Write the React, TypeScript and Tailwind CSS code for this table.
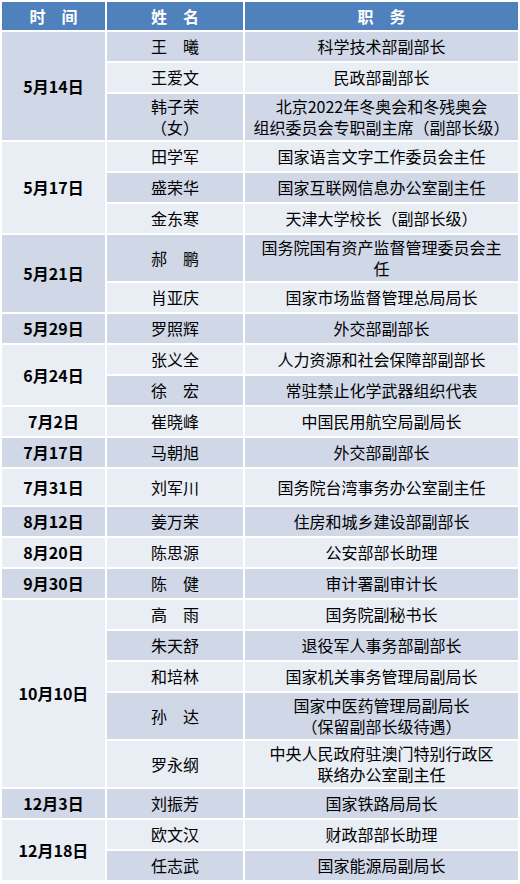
import React from "react";

type Row = { name: string[]; pos: string[]; tall?: boolean };
type Group = { date: string; rows: Row[] };

const groups: Group[] = [
    {
        date: "5月14日",
        rows: [
            { name: ["王　曦"], pos: ["科学技术部副部长"] },
            { name: ["王爱文"], pos: ["民政部副部长"] },
            { name: ["韩子荣", "（女）"], pos: ["北京2022年冬奥会和冬残奥会", "组织委员会专职副主席（副部长级）"] },
        ],
    },
    {
        date: "5月17日",
        rows: [
            { name: ["田学军"], pos: ["国家语言文字工作委员会主任"] },
            { name: ["盛荣华"], pos: ["国家互联网信息办公室副主任"] },
            { name: ["金东寒"], pos: ["天津大学校长（副部长级）"] },
        ],
    },
    {
        date: "5月21日",
        rows: [
            { name: ["郝　鹏"], pos: ["国务院国有资产监督管理委员会主", "任"] },
            { name: ["肖亚庆"], pos: ["国家市场监督管理总局局长"] },
        ],
    },
    { date: "5月29日", rows: [{ name: ["罗照辉"], pos: ["外交部副部长"] }] },
    {
        date: "6月24日",
        rows: [
            { name: ["张义全"], pos: ["人力资源和社会保障部副部长"] },
            { name: ["徐　宏"], pos: ["常驻禁止化学武器组织代表"] },
        ],
    },
    { date: "7月2日", rows: [{ name: ["崔晓峰"], pos: ["中国民用航空局副局长"] }] },
    { date: "7月17日", rows: [{ name: ["马朝旭"], pos: ["外交部副部长"] }] },
    { date: "7月31日", rows: [{ name: ["刘军川"], pos: ["国务院台湾事务办公室副主任"], tall: true }] },
    { date: "8月12日", rows: [{ name: ["姜万荣"], pos: ["住房和城乡建设部副部长"] }] },
    { date: "8月20日", rows: [{ name: ["陈思源"], pos: ["公安部部长助理"] }] },
    { date: "9月30日", rows: [{ name: ["陈　健"], pos: ["审计署副审计长"] }] },
    {
        date: "10月10日",
        rows: [
            { name: ["高　雨"], pos: ["国务院副秘书长"] },
            { name: ["朱天舒"], pos: ["退役军人事务部副部长"] },
            { name: ["和培林"], pos: ["国家机关事务管理局副局长"] },
            { name: ["孙　达"], pos: ["国家中医药管理局副局长", "（保留副部长级待遇）"] },
            { name: ["罗永纲"], pos: ["中央人民政府驻澳门特别行政区", "联络办公室副主任"] },
        ],
    },
    { date: "12月3日", rows: [{ name: ["刘振芳"], pos: ["国家铁路局局长"] }] },
    {
        date: "12月18日",
        rows: [
            { name: ["欧文汉"], pos: ["财政部部长助理"] },
            { name: ["任志武"], pos: ["国家能源局副局长"] },
        ],
    },
];

const DARK = "bg-[#d0d8e8]";
const LIGHT = "bg-[#e9edf4]";

function Lines({ lines }: { lines: string[] }) {
    return (
        <>
            {lines.map((l, i) => (
                <span key={i} className="block whitespace-nowrap">
                    {l}
                </span>
            ))}
        </>
    );
}

export default function App() {
    let index = 0;

    return (
        <div className="h-[884px] w-[520px] overflow-hidden bg-white font-['Noto_Sans_CJK_SC','Microsoft_YaHei',sans-serif] text-[16px] leading-[21px] text-black">
            <table className="w-[520px] table-fixed border-separate border-spacing-[2px]">
                <thead>
                    <tr className="h-[28px] bg-[#4f81bd] font-bold text-white">
                        <th className="w-[103px] p-0 text-center">时　间</th>
                        <th className="w-[136px] p-0 text-center">姓　名</th>
                        <th className="w-[273px] p-0 text-center">职　务</th>
                    </tr>
                </thead>
                <tbody>
                    {groups.map((g) =>
                        g.rows.map((r, ri) => {
                            const shade = index % 2 === 0 ? DARK : LIGHT;
                            const groupShade = ri === 0 ? shade : "";
                            index++;
                            const twoLines = r.pos.length > 1 || r.name.length > 1;
                            const height = r.tall ? "h-[36px]" : twoLines ? "h-[46px]" : "h-[29px]";
                            return (
                                <tr key={g.date + ri} className={height}>
                                    {ri === 0 && (
                                        <td
                                            rowSpan={g.rows.length}
                                            className={`${groupShade} p-0 text-center align-middle font-bold`}
                                        >
                                            {g.date}
                                        </td>
                                    )}
                                    <td className={`${shade} p-0 text-center align-middle`}>
                                        <Lines lines={r.name} />
                                    </td>
                                    <td className={`${shade} p-0 text-center align-middle`}>
                                        <Lines lines={r.pos} />
                                    </td>
                                </tr>
                            );
                        })
                    )}
                </tbody>
            </table>
        </div>
    );
}
